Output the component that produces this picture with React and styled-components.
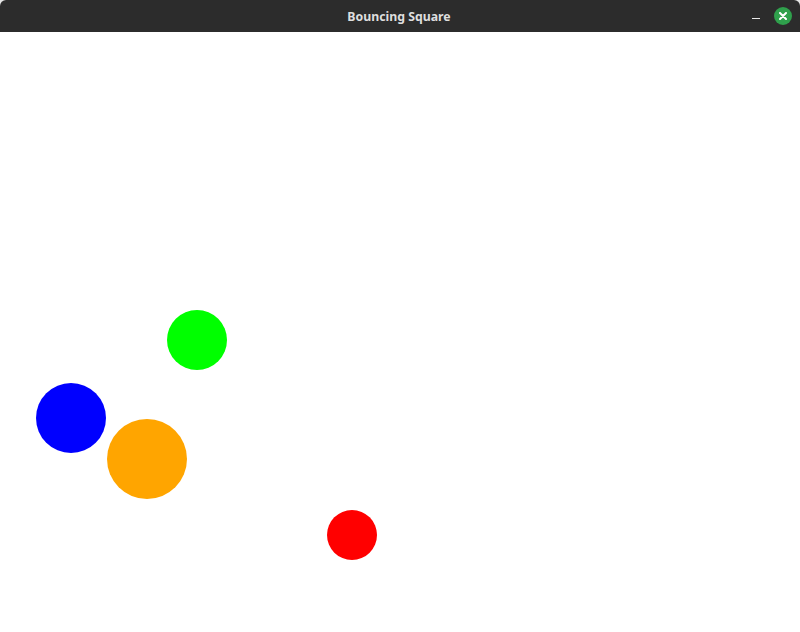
import React from 'react'
import styled, { createGlobalStyle } from 'styled-components'

const GlobalStyle = createGlobalStyle`
    html, body {
        margin:0;
        padding:0;
        background:#e6e6e6;
    }
    #root {
        width:800px;
        height:632px;
    }
`;

const Window = styled.div`
    width:800px;
    height:632px;
    display:flex;
    flex-direction:column;
    background:#ffffff;
    border-radius:6px 6px 0 0;
    overflow:hidden;
`;

const TitleBar = styled.div`
    height:32px;
    flex:0 0 32px;
    background:#2c2c2c;
    display:flex;
    align-items:center;
    justify-content:center;
    position:relative;
`;

const Title = styled.span`
    color:#dedede;
    font-family:'Noto Sans','DejaVu Sans',sans-serif;
    font-weight:700;
    font-size:12.3px;
    margin-left:-2px;
`;

const Controls = styled.div`
    position:absolute;
    right:8px;
    top:0;
    height:32px;
    display:flex;
    align-items:center;
    gap:14px;
`;

const Minimize = styled.div`
    width:8px;
    height:1px;
    background:#e8e8e8;
    margin-top:4px;
`;

const Close = styled.div`
    width:18px;
    height:18px;
    border-radius:50%;
    background:#2fa04c;
    display:flex;
    align-items:center;
    justify-content:center;
`;

const Canvas = styled.div`
    flex:1;
    position:relative;
    background:#ffffff;
`;

const Ball = styled.div`
    position:absolute;
    border-radius:50%;
    background:${({ color }) => color};
`;

const balls = [
    { color: '#00ff00', x: 167, y: 278, d: 60 },
    { color: '#0000ff', x: 36, y: 351, d: 70 },
    { color: '#ffa500', x: 107, y: 387, d: 80 },
    { color: '#ff0000', x: 327, y: 478, d: 50 },
];

export default function App() {
    return (
        <>
            <GlobalStyle />
            <Window>
                <TitleBar>
                    <Title>Bouncing Square</Title>
                    <Controls>
                        <Minimize />
                        <Close>
                            <svg width="8" height="8" viewBox="0 0 8 8">
                                <path d="M1 1 L7 7 M7 1 L1 7" stroke="#ffffff" strokeWidth="2" strokeLinecap="round" />
                            </svg>
                        </Close>
                    </Controls>
                </TitleBar>
                <Canvas>
                    {balls.map((b, i) => (
                        <Ball
                            key={i}
                            color={b.color}
                            style={{ left: b.x, top: b.y, width: b.d, height: b.d }}
                        />
                    ))}
                </Canvas>
            </Window>
        </>
    )
}
